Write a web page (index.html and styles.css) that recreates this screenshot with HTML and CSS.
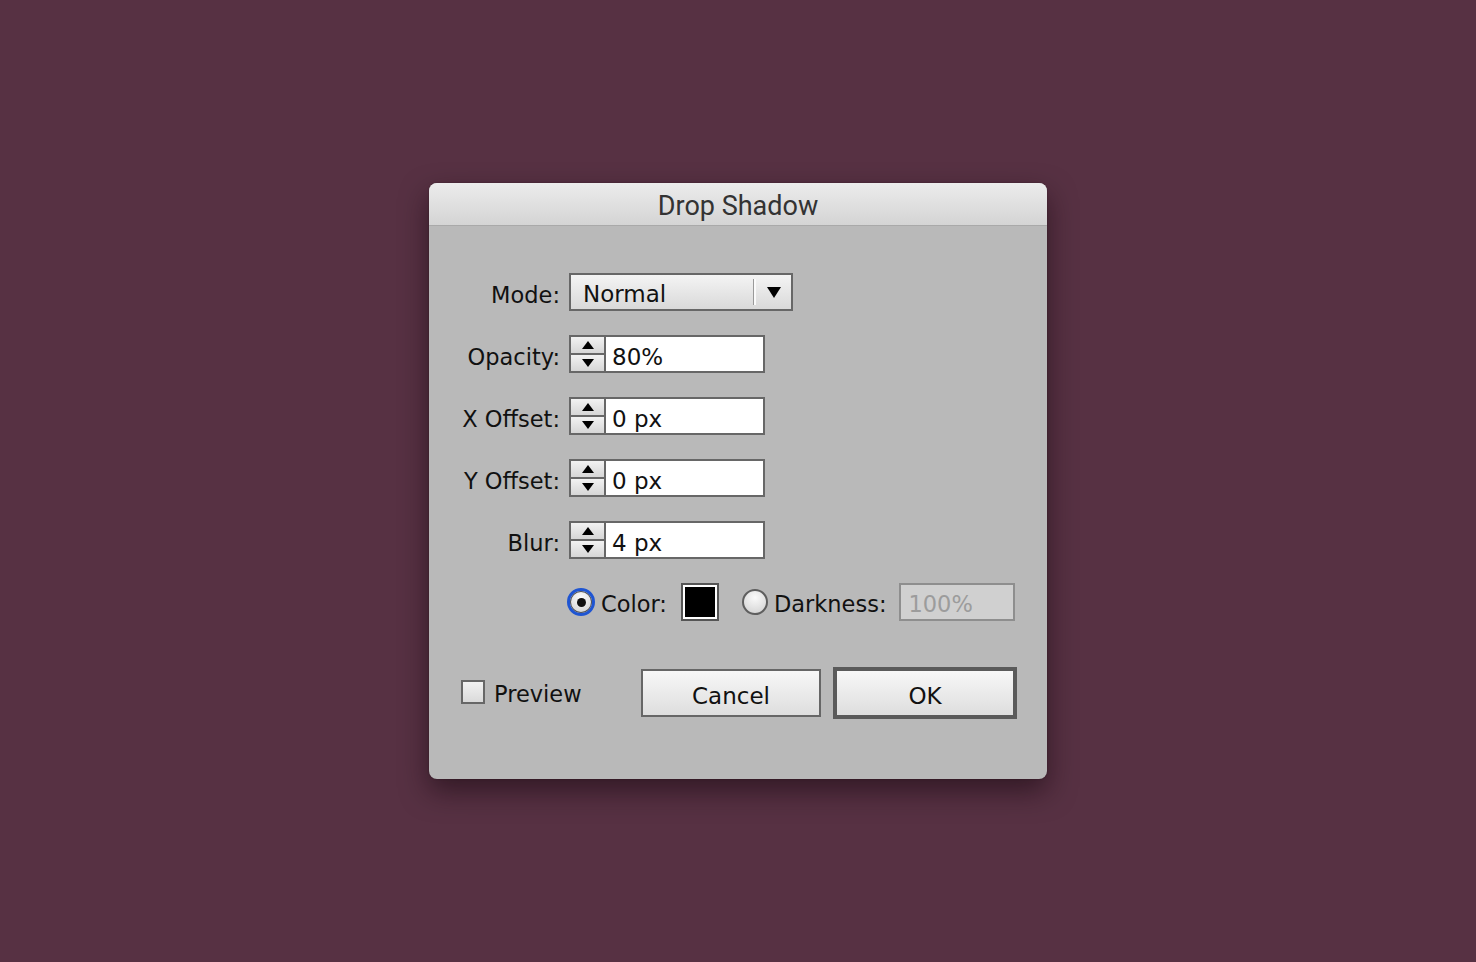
FILE: index.html
```html
<!DOCTYPE html>
<html>
<head>
<meta charset="utf-8">
<title>Drop Shadow</title>
<link rel="stylesheet" href="styles.css">
</head>
<body>
<div class="dialog">
  <div class="titlebar">Drop Shadow</div>
  <div class="content">
    <div class="row">
      <span class="label">Mode:</span>
      <div class="select">
        <span class="select-text">Normal</span>
        <span class="select-sep"></span>
        <span class="select-arrow"></span>
      </div>
    </div>
    <div class="row">
      <span class="label">Opacity:</span>
      <div class="spin-field">
        <div class="spinner"><span class="up"><i class="tri-up"></i></span><span class="down"><i class="tri-down"></i></span></div>
        <span class="field-text">80%</span>
      </div>
    </div>
    <div class="row">
      <span class="label">X Offset:</span>
      <div class="spin-field">
        <div class="spinner"><span class="up"><i class="tri-up"></i></span><span class="down"><i class="tri-down"></i></span></div>
        <span class="field-text">0 px</span>
      </div>
    </div>
    <div class="row">
      <span class="label">Y Offset:</span>
      <div class="spin-field">
        <div class="spinner"><span class="up"><i class="tri-up"></i></span><span class="down"><i class="tri-down"></i></span></div>
        <span class="field-text">0 px</span>
      </div>
    </div>
    <div class="row">
      <span class="label">Blur:</span>
      <div class="spin-field">
        <div class="spinner"><span class="up"><i class="tri-up"></i></span><span class="down"><i class="tri-down"></i></span></div>
        <span class="field-text">4 px</span>
      </div>
    </div>
    <div class="row color-row">
      <span class="label"></span>
      <span class="radio checked"><span class="dot"></span></span>
      <span class="opt-text">Color:</span>
      <span class="swatch"><span class="swatch-in"></span></span>
      <span class="radio second"></span>
      <span class="opt-text">Darkness:</span>
      <span class="disabled-field">100%</span>
    </div>
    <div class="buttons">
      <label class="check"><span class="box"></span><span>Preview</span></label>
      <div class="btn-group">
        <span class="btn">Cancel</span>
        <span class="btn default">OK</span>
      </div>
    </div>
  </div>
</div>
</body>
</html>
```

FILE: styles.css
```css
html, body {
  margin: 0;
  height: 100%;
}
body {
  background: #573143;
  display: flex;
  align-items: center;
  justify-content: center;
  font-family: "DejaVu Sans", "Liberation Sans", sans-serif;
  color: #111;
}
.dialog {
  width: 618px;
  height: 596px;
  background: #b9b9b9;
  border-radius: 8px;
  box-shadow: 0 12px 28px rgba(20, 5, 12, 0.55), 0 0 2px rgba(0,0,0,0.3);
  overflow: hidden;
  display: flex;
  flex-direction: column;
}
.titlebar {
  height: 43px;
  box-sizing: border-box;
  background: linear-gradient(#ececec, #d4d4d4);
  border-bottom: 1px solid #a9a9a9;
  text-align: center;
  font-family: Roboto, "Liberation Sans", sans-serif;
  font-size: 27px;
  line-height: 46px;
  color: #333;
}
.content {
  padding: 47px 30px 0 32px;
  display: flex;
  flex-direction: column;
  gap: 24px;
}
.row {
  display: flex;
  align-items: center;
  height: 38px;
  font-size: 22.5px;
}
.label {
  width: 99px;
  text-align: right;
  margin-right: 9px;
  padding-top: 5px;
  white-space: nowrap;
}
.select {
  width: 224px;
  height: 38px;
  box-sizing: border-box;
  border: 2px solid #676767;
  background: linear-gradient(#f4f4f4, #d9d9d9);
  display: flex;
  align-items: center;
}
.select-text {
  flex: 1;
  padding-left: 12px;
  padding-top: 3px;
  font-size: 23px;
}
.select-sep {
  width: 1px;
  height: 26px;
  background: #9a9a9a;
  border-right: 2px solid #fafafa;
  margin-right: 11px;
}
.select-arrow {
  width: 0;
  height: 0;
  border-left: 7px solid transparent;
  border-right: 7px solid transparent;
  border-top: 11px solid #000;
  margin-right: 10px;
  margin-top: 1px;
}
.spin-field {
  width: 196px;
  height: 38px;
  box-sizing: border-box;
  border: 2px solid #676767;
  background: #fff;
  display: flex;
}
.spinner {
  width: 33px;
  display: flex;
  flex-direction: column;
  border-right: 2px solid #676767;
}
.spinner span {
  flex: 1;
  display: flex;
  align-items: center;
  justify-content: center;
  background: linear-gradient(#f2f2f2, #d6d6d6);
}
.spinner .up {
  border-bottom: 2px solid #676767;
}
.tri-up {
  width: 0; height: 0;
  border-left: 6px solid transparent;
  border-right: 6px solid transparent;
  border-bottom: 8px solid #000;
}
.tri-down {
  width: 0; height: 0;
  border-left: 6px solid transparent;
  border-right: 6px solid transparent;
  border-top: 8px solid #000;
}
.field-text {
  padding-left: 6px;
  padding-top: 5px;
  align-self: center;
  font-size: 23px;
}
.color-row .label {
  margin-right: 7px;
}
.radio {
  width: 28px;
  height: 28px;
  box-sizing: border-box;
  border-radius: 50%;
  border: 2px solid #5e5e5e;
  background: radial-gradient(circle at 50% 30%, #fafafa, #cfcfcf);
  display: flex;
  align-items: center;
  justify-content: center;
}
.radio.checked {
  border: 3px solid #1f55d2;
  box-shadow: inset 0 0 0 1px #555;
}
.radio .dot {
  width: 9px;
  height: 9px;
  border-radius: 50%;
  background: #111;
}
.radio.second {
  width: 26px;
  height: 26px;
  margin-left: 23px;
}
.opt-text {
  margin-left: 6px;
  padding-top: 3px;
}
.swatch {
  width: 38px;
  height: 38px;
  box-sizing: border-box;
  border: 2px solid #555;
  background: #fff;
  padding: 2px;
  margin-left: 14px;
  display: flex;
}
.swatch-in {
  flex: 1;
  background: #000;
}
.disabled-field {
  width: 116px;
  height: 38px;
  box-sizing: border-box;
  margin-left: 13px;
  border: 2px solid #8e8e8e;
  background: #d0d0d0;
  color: #9c9c9c;
  padding: 6px 0 0 7px;
  font-size: 22.5px;
}
.buttons {
  display: flex;
  align-items: center;
  justify-content: space-between;
  margin-top: 22px;
  height: 52px;
}
.check {
  display: flex;
  align-items: center;
  font-size: 22.5px;
  gap: 9px;
  margin-top: -2px;
}
.check .box {
  width: 24px;
  height: 24px;
  box-sizing: border-box;
  border: 2px solid #676767;
  background: linear-gradient(#f2f2f2, #dadada);
}
.check span:last-child {
  padding-top: 3px;
}
.btn-group {
  display: flex;
  align-items: center;
  gap: 12px;
}
.btn {
  width: 180px;
  height: 48px;
  box-sizing: border-box;
  border: 2px solid #666;
  background: linear-gradient(#f7f7f7, #dedede);
  display: flex;
  align-items: center;
  justify-content: center;
  padding-top: 5px;
  font-size: 23px;
}
.btn.default {
  width: 184px;
  height: 52px;
  border: 4px solid #5a5a5a;
}
```
